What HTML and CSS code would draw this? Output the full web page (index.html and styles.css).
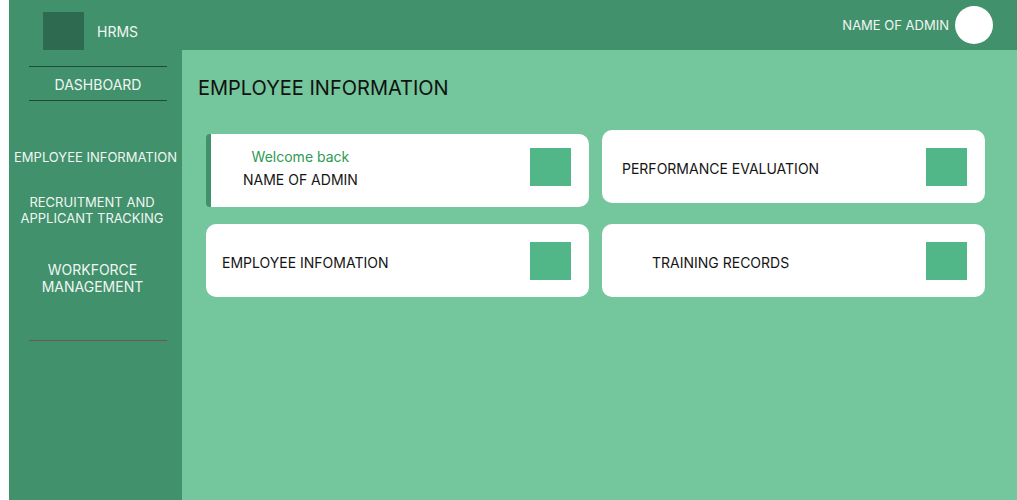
FILE: index.html
```html
<!DOCTYPE html>
<html lang="en">
<head>
<meta charset="utf-8">
<title>HRMS</title>
<link rel="stylesheet" href="styles.css">
</head>
<body>
<div class="app">
  <aside class="sidebar">
    <div class="brand">
      <div class="brand-logo"></div>
      <span class="brand-name">HRMS</span>
    </div>
    <div class="nav-dashboard">DASHBOARD</div>
    <nav class="nav">
      <a class="nav-item nav-item--first">EMPLOYEE INFORMATION</a>
      <a class="nav-item nav-item--recruit">RECRUITMENT AND<br>APPLICANT TRACKING</a>
      <a class="nav-item nav-item--workforce">WORKFORCE<br>MANAGEMENT</a>
    </nav>
    <div class="nav-divider"></div>
  </aside>
  <div class="content">
    <header class="topbar">
      <span class="admin-name">NAME OF ADMIN</span>
      <span class="avatar"></span>
    </header>
    <main class="main">
      <h1 class="page-title">EMPLOYEE INFORMATION</h1>
      <div class="cards">
        <div class="card card--welcome">
          <div class="card-text card-text--welcome">
            <div class="welcome">Welcome back</div>
            <div>NAME OF ADMIN</div>
          </div>
          <div class="card-icon card-icon--raised"></div>
        </div>
        <div class="card">
          <div class="card-text card-text--perf">PERFORMANCE EVALUATION</div>
          <div class="card-icon"></div>
        </div>
        <div class="card">
          <div class="card-text card-text--emp">EMPLOYEE INFOMATION</div>
          <div class="card-icon"></div>
        </div>
        <div class="card">
          <div class="card-text card-text--training">TRAINING RECORDS</div>
          <div class="card-icon"></div>
        </div>
      </div>
    </main>
  </div>
</div>
</body>
</html>
```

FILE: styles.css
```css
* { box-sizing: border-box; }
html, body { margin: 0; padding: 0; height: 100%; }
body {
  font-family: Inter, "Liberation Sans", sans-serif;
  background: #ffffff;
}
.app {
  display: flex;
  height: 500px;
  padding-left: 9px;
}
.sidebar {
  width: 173px;
  flex: none;
  background: #40916c;
  color: #f2f6f3;
  display: flex;
  flex-direction: column;
}
.brand {
  display: flex;
  align-items: center;
  height: 50px;
  padding-top: 12px;
  padding-left: 34px;
}
.brand-logo {
  width: 41px;
  height: 38px;
  background: #2d6a4f;
}
.brand-name {
  font-size: 14px;
  margin-left: 13px;
}
.nav-dashboard {
  margin: 16px 15px 0 20px;
  height: 35px;
  padding-top: 1px;
  border-top: 1px solid #1f4a37;
  border-bottom: 1px solid #1f4a37;
  display: flex;
  align-items: center;
  justify-content: center;
  font-size: 14px;
}
.nav {
  display: flex;
  flex-direction: column;
  align-items: center;
  text-align: center;
  font-size: 13px;
  line-height: 16.5px;
}
.nav-item { display: block; }
.nav-item--first { margin-top: 48px; }
.nav-item--recruit { margin-top: 28px; margin-right: 7px; }
.nav-item--workforce {
  margin-top: 34px;
  margin-right: 6px;
  font-size: 14px;
  line-height: 17px;
}
.nav-divider {
  margin: 45px 15px 0 20px;
  border-top: 1px solid #6e5658;
}
.content {
  flex: 1;
  display: flex;
  flex-direction: column;
}
.topbar {
  height: 50px;
  flex: none;
  background: #40916c;
  display: flex;
  align-items: center;
  justify-content: flex-end;
  padding-right: 24px;
  color: #f2f6f3;
}
.admin-name { font-size: 13px; }
.avatar {
  width: 38px;
  height: 38px;
  border-radius: 50%;
  background: #ffffff;
  margin-left: 6px;
}
.main {
  flex: 1;
  background: #74c69d;
  padding: 0 32px 0 16px;
}
.page-title {
  margin: 26px 0 0 0;
  font-size: 20px;
  font-weight: 400;
  color: #111;
  line-height: 24px;
}
.cards {
  margin: 30px 0 0 8px;
  display: grid;
  grid-template-columns: 383px 383px;
  column-gap: 13px;
  row-gap: 17px;
  align-items: start;
}
.card {
  height: 73px;
  background: #ffffff;
  border-radius: 10px;
  display: flex;
  align-items: center;
  justify-content: space-between;
  padding-right: 18px;
  font-size: 14px;
  color: #151515;
}
.card--welcome {
  margin-top: 4px;
  border-left: 5px solid #40916c;
  border-radius: 4px 10px 10px 4px;
}
.card-icon {
  width: 41px;
  height: 38px;
  background: #52b788;
  flex: none;
}
.card-icon--raised { margin-bottom: 8px; }
.card-text { padding-top: 3px; }
.card-text--welcome {
  padding-top: 0;
  padding-bottom: 6px;
  padding-left: 32px;
  text-align: center;
  line-height: 23px;
}
.welcome { color: #2d9a55; }
.card-text--perf { padding-left: 20px; }
.card-text--emp { padding-left: 16px; }
.card-text--training { padding-left: 50px; }
```
